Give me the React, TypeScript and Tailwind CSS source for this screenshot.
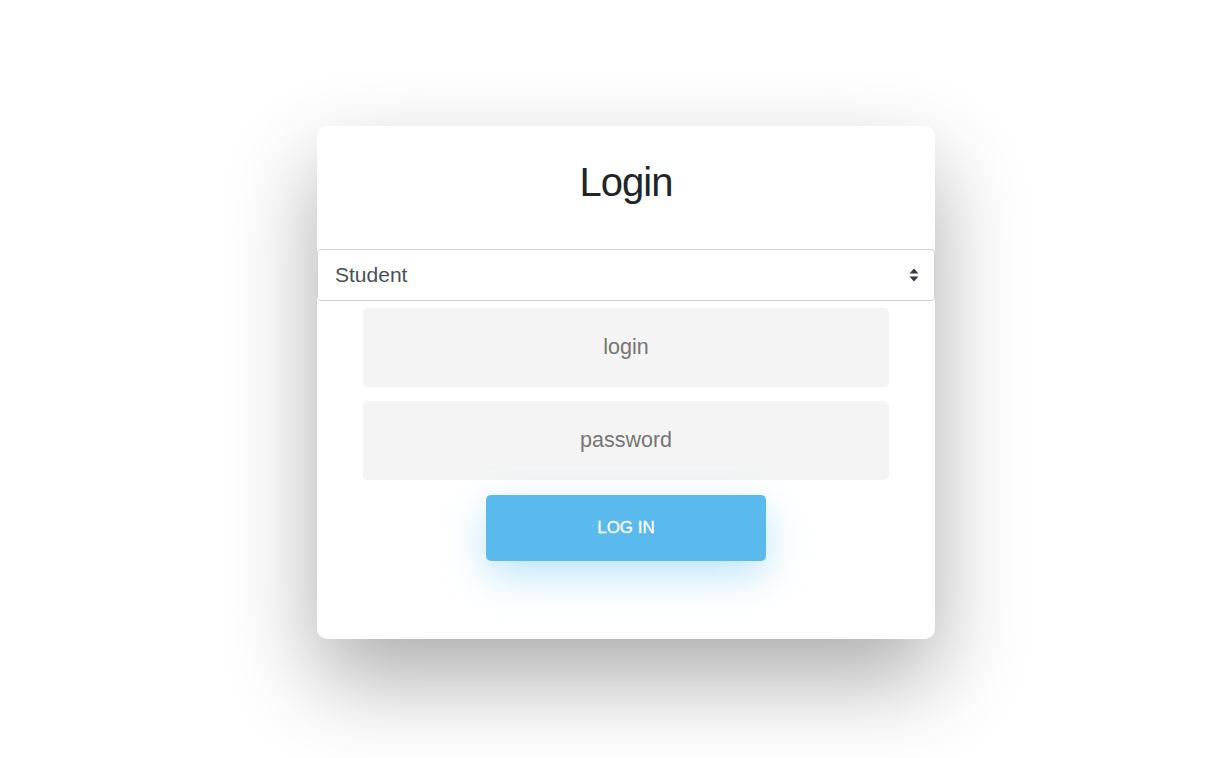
import React, { useState } from 'react';

const SelectArrows = () => (
  <svg width="10" height="14" viewBox="0 0 10 14" className="pointer-events-none absolute right-[16px] top-1/2 -translate-y-1/2">
    <path d="M5 0.5 L9.5 5.5 H0.5 Z" fill="#343a40" />
    <path d="M5 13.5 L9.5 8.5 H0.5 Z" fill="#343a40" />
  </svg>
);

export default function App() {
  const [role, setRole] = useState('Student');
  const [login, setLogin] = useState('');
  const [password, setPassword] = useState('');

  return (
    <div className="min-h-[758px] bg-white flex justify-center pl-[28px] pt-[126px] font-['Liberation_Sans',Arial,sans-serif]">
      <div className="w-[618px] h-[513px] bg-white rounded-[10px] shadow-[0_40px_90px_rgba(0,0,0,0.33)] flex flex-col items-center">
        <h1 className="mt-[32px] text-[40px] leading-[48px] tracking-[-1px] text-[#212529] font-normal">Login</h1>

        {/* rôle */}
        <div className="relative w-full mt-[43px]">
          <select
            value={role}
            onChange={e => setRole(e.target.value)}
            className="appearance-none w-full h-[52px] border border-[#ced4da] rounded-[4px] bg-white pl-[17px] pr-10 text-[21px] text-[#495057] outline-none"
          >
            <option>Student</option>
            <option>Teacher</option>
          </select>
          <SelectArrows />
        </div>

        <div className="w-[526px] flex flex-col gap-[14px] mt-[7px]">
          <input
            type="text"
            placeholder="login"
            value={login}
            onChange={e => setLogin(e.target.value)}
            className="h-[79px] w-full bg-[#f4f4f4] rounded-[5px] text-center text-[21.5px] text-[#495057] placeholder:text-[#757575] outline-none"
          />
          <input
            type="password"
            placeholder="password"
            value={password}
            onChange={e => setPassword(e.target.value)}
            className="h-[79px] w-full bg-[#f4f4f4] rounded-[5px] text-center text-[21.5px] text-[#495057] placeholder:text-[#757575] outline-none"
          />
        </div>

        <button className="mt-[15px] w-[280px] h-[66px] bg-[#5bbaed] rounded-[5px] text-white text-[17px] uppercase [-webkit-text-stroke:0.3px_white] shadow-[0_14px_40px_rgba(91,186,237,0.4)]">
          Log in
        </button>
      </div>
    </div>
  );
}
